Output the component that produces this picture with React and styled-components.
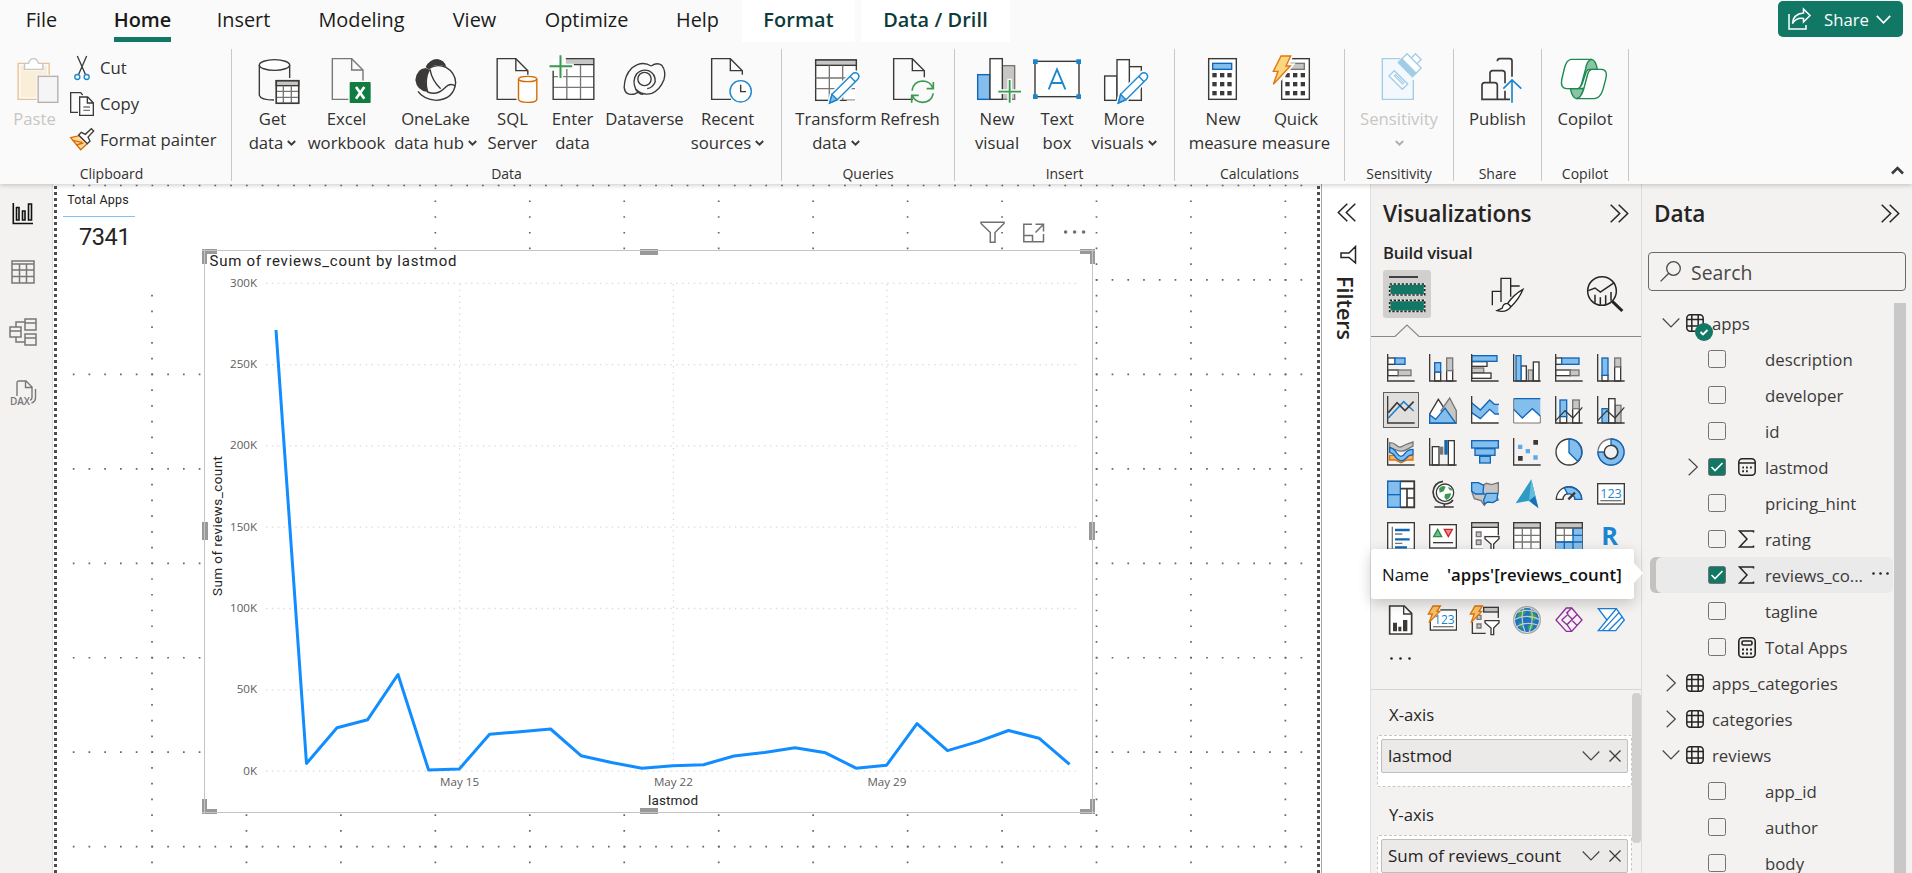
import React from 'react';
import styled, { createGlobalStyle, css } from 'styled-components';

const DARK = '#3b3a39';
const BLUE = '#83beec';
const BLUE_D = '#1066b8';
const GRAY = '#c8c6c4';
const GRAY_D = '#797775';
const GREEN = '#117865';
const UI = "'Open Sans', 'Noto Sans', sans-serif";
const DIN = "Roboto, 'Noto Sans', sans-serif";

const Global = createGlobalStyle`
  * { box-sizing: border-box; }
  body { margin: 0; background: #fff; font-family: ${UI}; color: #252423; overflow: hidden; }
  svg { display: block; flex: none; overflow: visible; }
`;

const Page = styled.div`
  width: 1912px;
  height: 873px;
  display: flex;
  flex-direction: column;
  overflow: hidden;
`;

/* ---------- ribbon ---------- */
const Ribbon = styled.header`
  height: 184px;
  flex: none;
  background: #fafafa;
  box-shadow: 0 1px 5px rgba(0, 0, 0, 0.22);
  position: relative;
  z-index: 3;
  display: flex;
  flex-direction: column;
`;
const TabBar = styled.nav`
  height: 49px;
  display: flex;
`;
const Tab = styled.div`
  width: ${(p) => p.$w}px;
  height: 42px;
  margin-left: ${(p) => p.$gap || 0}px;
  display: flex;
  justify-content: center;
  font-size: 19.9px;
  line-height: 40px;
  color: #1b1a19;
  white-space: nowrap;
  ${(p) => p.$active && css`font-weight: 600;`}
  ${(p) => p.$context && css`font-weight: 600; background: #fff; color: #0c3b3a; letter-spacing: 0.1px;`}
  span { ${(p) => p.$active && css`border-bottom: 5px solid ${GREEN}; height: 42px;`} }
`;
const ShareButton = styled.button`
  margin: 1px 9px 0 auto;
  width: 125px;
  height: 36px;
  border: 0;
  border-radius: 5px;
  background: ${GREEN};
  color: #fff;
  font: 400 16.7px/36px ${UI};
  padding: 0 12px 0 10px;
  display: flex;
  align-items: center;
  span { margin: 0 7px 0 13px; width: 45px; padding-top: 1px; }
`;
const Groups = styled.div`
  display: flex;
  height: 132px;
`;
const Group = styled.section`
  width: ${(p) => p.$w}px;
  border-right: 1px solid #c8c8c8;
  display: flex;
  flex-direction: column;
`;
const GroupBody = styled.div`
  height: 118px;
  flex: none;
  display: flex;
  justify-content: ${(p) => (p.$pad ? 'flex-start' : 'center')};
  padding-left: ${(p) => p.$pad || 0}px;
  padding-top: 5px;
`;
const GroupLabel = styled.div`
  height: 14px;
  padding-right: ${(p) => p.$shift || 0}px;
  font-size: 14px;
  line-height: 14px;
  text-align: center;
  color: #323130;
`;
const Command = styled.div`
  width: ${(p) => p.$w}px;
  display: flex;
  flex-direction: column;
  align-items: center;
  font-size: 16.7px;
  line-height: 24px;
  color: ${(p) => (p.$off ? '#c8c6c4' : '#323130')};
  white-space: nowrap;
`;
const CommandText = styled.div`
  margin-top: 3px;
  min-height: 24px;
  display: flex;
  align-items: center;
  gap: 4px;
  & + & { margin-top: 0; }
`;
const ClipList = styled.div`
  display: flex;
  flex-direction: column;
  margin-top: -4px;
`;
const ClipRow = styled.div`
  height: 36px;
  display: flex;
  align-items: center;
  gap: 6px;
  font-size: 16.7px;
  line-height: 26px;
  color: #323130;
  white-space: nowrap;
`;
const Collapse = styled.div`
  margin: 117px 8px 0 auto;
`;

/* Ribbon icons are drawn on a grid of three units to the pixel. */
const Ico = ({ x, y = 162, w = 48, h = 50, children, c = DARK, sw = 4.2 }) => (
  <svg width={w} height={h} viewBox={`${x} ${y} ${w * 3} ${h * 3}`} fill="none" stroke={c} strokeWidth={sw}>
    {children}
  </svg>
);
const Chev = ({ c = DARK }) => (
  <svg width="9" height="6" viewBox="0 0 9 6" fill="none" stroke={c} strokeWidth="1.9">
    <path d="M.8 1 4.5 4.6 8.2 1" />
  </svg>
);
const Doc = ({ x, c = DARK, end = 240 }) => (
  <>
    <path d={`M${x + 60} 298H${x + 2}V176H${x + 58}L${x + 94} 212V${end - 16}`} stroke={c} fill="none" />
    <path d={`M${x + 58} 176V212H${x + 94}`} stroke={c} />
  </>
);
const Pencil = ({ x, y }) => (
  <g transform={`translate(${x} ${y})`} stroke="#1b86d0">
    <path d="M3 92 10 66 72 4Q80-2 88 5 94 12 88 20L26 82Z" fill="#fafafa" stroke="#fafafa" strokeWidth="14" />
    <path d="M3 92 10 66 72 4Q80-2 88 5 94 12 88 20L26 82Z" fill="#fff" />
    <path d="M3 92 10 66 26 82Z" fill={BLUE} />
    <path d="M64 12 80 28" />
  </g>
);

const icons = {
  get: (
    <Ico x={743}>
      <path d="M774 195V286Q778 300 818 300M865 195V234" />
      <ellipse cx="819.5" cy="195" rx="45.5" ry="16" fill="#fff" />
      <rect x="825" y="242" width="67" height="68" fill="#fff" />
      <rect x="825" y="242" width="67" height="15" fill={GRAY} />
      <path d="M825 274H892M825 292H892M846 257V310M870 257V310" stroke={GRAY_D} strokeWidth="4" />
      <rect x="825" y="242" width="67" height="68" />
    </Ico>
  ),
  excel: (
    <Ico x={970}>
      <path d="M998 176H1056L1090 210V298H998Z" fill="#fafafa" stroke="#797775" />
      <path d="M1056 176V210H1090" stroke="#797775" />
      <rect x="1046" y="242" width="70" height="70" fill="#fafafa" stroke="none" />
      <rect x="1050" y="246" width="63" height="63" rx="3" fill="#107c41" stroke="none" />
      <path d="M1069 261 1094 296M1094 261 1069 296" stroke="#fff" strokeWidth="8" />
    </Ico>
  ),
  onelake: (
    <Ico x={1236}>
      <path d="M1277 201Q1288 178 1312 177 1334 180 1339 201 1308 186 1284 208Z" fill={DARK} stroke="none" />
      <path d="M1277 204Q1250 206 1246 240 1250 272 1283 276 1270 240 1288 210Z" fill={DARK} stroke="none" />
      <path d="M1286 206Q1310 190 1338 202 1366 218 1367 248 1362 298 1309 301 1270 298 1254 274" />
      <path d="M1288 208Q1272 240 1283 276 1310 288 1334 264 1350 246 1366 258M1290 208Q1296 242 1322 266" />
    </Ico>
  ),
  sql: (
    <Ico x={25.5}>
      <Doc x={48} />
      <path d="M114 237V298Q116 307 142 307 168 307 169 298V237" stroke="#d86b00" fill="#fff" />
      <ellipse cx="141.500" cy="237" rx="27.500" ry="8" stroke="#d86b00" fill="#fff" />
    </Ico>
  ),
  enter: (
    <Ico x={205.5}>
      <rect x="218" y="176" width="122" height="122" fill="#fff" stroke="none" />
      <rect x="256" y="176" width="84" height="17" fill={GRAY} stroke="none" />
      <path d="M218 230H340M218 262H340M259 200V298M300 196V298" stroke={GRAY_D} strokeWidth="4" />
      <path d="M256 176H340V298H218V212M276 194H340" />
      <path d="M240 162V236M204 199H280" stroke="#fafafa" strokeWidth="16" />
      <path d="M240 166V234M207 199H275" stroke="#3a9a50" strokeWidth="6" />
    </Ico>
  ),
  dataverse: (
    <Ico x={421.5}>
      <circle cx="492" cy="237" r="20" />
      <path d="M512 198Q484 180 454 204 432 226 431 262 434 288 462 282 468 280 474 276" />
      <path d="M512 198Q530 186 544 196 558 214 550 240 538 270 514 280 486 288 466 268 454 244 468 222 484 206 504 212 526 222 524 246 516 264 500 266" />
      <path d="M466 268Q474 282 488 283" />
    </Ico>
  ),
  recent: (
    <Ico x={672}>
      <Doc x={693} />
      <circle cx="782" cy="274" r="32" fill="#fff" stroke="#1b86d0" />
      <path d="M782 254V275H798" />
    </Ico>
  ),
  transform: (
    <Ico x={996}>
      <rect x="1007" y="180" width="122" height="121" fill="#fff" />
      <rect x="1007" y="180" width="122" height="16" fill={GRAY} />
      <path d="M1007 234H1129M1007 266H1129M1048 196V300M1088 196V300" stroke={GRAY_D} strokeWidth="4" />
      <path d="M1100 310H1134V240" stroke="#fafafa" strokeWidth="18" />
      <Pencil x={1046} y={217} />
    </Ico>
  ),
  refresh: (
    <Ico x={1218}>
      <Doc x={1239} end={248} />
      <path d="M1296 272Q1300 244 1328 243 1350 243 1359 264M1360 246V266H1340M1360 280Q1354 306 1328 307 1304 306 1297 286M1295 308V286H1316" stroke="#3a9a50" strokeWidth="5" />
    </Ico>
  ),
  newVisual: (
    <Ico x={39}>
      <rect x="53" y="224" width="36" height="74" fill={BLUE} stroke={BLUE_D} />
      <rect x="127" y="197" width="37" height="101" fill={GRAY} stroke={GRAY_D} />
      <rect x="90" y="176" width="37" height="122" fill="#fff" />
      <path d="M149 236V312M112 275H186" stroke="#fafafa" strokeWidth="14" />
      <path d="M149 240V308M115 275H183" stroke="#3a9a50" strokeWidth="5.500" />
    </Ico>
  ),
  text: (
    <Ico x={219}>
      <rect x="225" y="184" width="132" height="106" fill="#fff" />
      <path d="M219 178h14v14h-14ZM349 178h14v14h-14ZM219 283h14v14h-14ZM349 283h14v14h-14Z" fill="#1b86d0" stroke="none" />
      <path d="M266 268 291 208 316 268M274 249H308" stroke="#1b86d0" strokeWidth="5.500" />
    </Ico>
  ),
  more: (
    <Ico x={420}>
      <rect x="434" y="228" width="37" height="73" fill="#fff" />
      <rect x="508" y="200" width="36" height="101" fill="#fff" />
      <rect x="471" y="179" width="37" height="122" fill="#fff" />
      <Pencil x={472} y={217} />
    </Ico>
  ),
  calc: (
    <Ico x={717}>
      <rect x="746" y="176" width="83" height="122" fill="#fff" />
      <rect x="758" y="190" width="57" height="18" fill={BLUE} stroke={BLUE_D} />
      {[219, 246, 273].map((y) => [757, 780, 802].map((x) => <rect key={x + y * 9} x={x} y={y} width="13" height="13" fill={DARK} stroke="none" />))}
    </Ico>
  ),
  quick: (
    <Ico x={936}>
      <rect x="965" y="176" width="83" height="122" fill="#fff" />
      <rect x="984" y="190" width="49" height="18" fill={GRAY} stroke={GRAY_D} />
      {[219, 246, 273].map((y) => [976, 999, 1022].map((x) => <rect key={x + y * 9} x={x} y={y} width="13" height="13" fill={DARK} stroke="none" />))}
      <path d="M963 168H992L980 197H992L946 253 953 224H939Z" fill="#fafafa" stroke="#fafafa" strokeWidth="14" />
      <path d="M963 168H992L978 198H991L940 253 954 214H940Z" fill="#fcd77f" stroke="#e07a10" />
    </Ico>
  ),
  sensitivity: (
    <Ico x={1246} c="#a3cde6">
      <path d="M1322 176H1268V298H1361V240" fill="#f3f8fc" />
      <g transform="rotate(45 1342 204)">
        <rect x="1330" y="156" width="24" height="24" fill="#fff" />
        <rect x="1312" y="174" width="60" height="22" fill="#fff" />
        <rect x="1312" y="196" width="60" height="15" fill="#a3cde6" />
      </g>
      <path d="M1304 212 1344 252 1328 268 1288 228Z" fill="#fff" />
      <path d="M1304 224 1332 252" strokeWidth="9" />
      <path d="M1305 225 1331 251" stroke="#fff" strokeWidth="2.500" />
    </Ico>
  ),
  publish: (
    <Ico x={126} sw={5}>
      <path d="M150 298V256Q150 248 158 248H188Q196 248 196 256V298ZM174 246V220Q174 212 182 212H211Q219 212 219 220V250M196 184Q196 176 203 176H233Q240 176 240 183V230M150 298H234M219 272V298" />
      <path d="M240 308V240M214 266 240 240 268 266" stroke="#1b86d0" />
    </Ico>
  ),
  copilot: (
    <Ico x={388} c="#1a8a50">
      <path d="M458 208Q466 178 480 178 492 180 497 208H474Q466 208 462 220L452 250Q446 265 436 265Z" fill="#8cc3a4" />
      <path d="M456 265Q448 296 434 296 422 294 416 266H440Z" fill="#8cc3a4" />
      <path d="M480 178H418Q404 180 398 206L390 240Q386 264 404 266H438Q446 264 450 250L462 206Q466 180 480 178Z" fill="#fff" />
      <path d="M434 296H488Q506 294 514 268L522 238Q530 210 510 208H480Q472 210 468 222L456 268Q448 294 434 296Z" fill="#fff" />
    </Ico>
  ),
};

const groups = [
  { label: 'Data', w: 550, pad: 7, items: [
    ['get', 67, ['Get', 'data'], 1], ['excel', 81, ['Excel', 'workbook']], ['onelake', 97, ['OneLake', 'data hub'], 1],
    ['sql', 57, ['SQL', 'Server']], ['enter', 63, ['Enter', 'data']], ['dataverse', 81, ['Dataverse']], ['recent', 85, ['Recent', 'sources'], 1]] },
  { label: 'Queries', w: 173, pad: 11, items: [['transform', 86, ['Transform', 'data'], 1], ['refresh', 62, ['Refresh']]] },
  { label: 'Insert', w: 220, pad: 15, items: [['newVisual', 54, ['New', 'visual']], ['text', 66, ['Text', 'box']], ['more', 68, ['More', 'visuals'], 1]] },
  { label: 'Calculations', w: 170, pad: 12, items: [['calc', 72, ['New', 'measure']], ['quick', 74, ['Quick', 'measure']]] },
  { label: 'Sensitivity', w: 109, items: [['sensitivity', 100, ['Sensitivity', ''], 1, true]] },
  { label: 'Share', w: 88, items: [['publish', 80, ['Publish']]] },
  { label: 'Copilot', w: 87, items: [['copilot', 80, ['Copilot']]] },
];

/* ---------- body ---------- */
const Body = styled.main`
  flex: 1;
  display: flex;
  min-height: 0;
`;
const Rail = styled.aside`
  width: 53px;
  flex: none;
  background: #f3f2f1;
  border-right: 1px solid #e1dfdd;
  padding: 18px 6px 0 0;
  display: flex;
  flex-direction: column;
  align-items: center;
  gap: 34px;
`;
const Canvas = styled.section`
  width: 1269px;
  flex: none;
  position: relative;
  background: #fff;
  border-right: 1px solid #a6a6a6;
  overflow: hidden;
`;
const CanvasLayer = styled.svg`
  position: absolute;
  left: 0;
  top: 0;
`;
const Card = styled.div`
  position: absolute;
  left: 10px;
  top: 3px;
  width: 290px;
  height: 102px;
  background: #fff;
`;
const CardTitle = styled.div`
  width: 72px;
  height: 30px;
  border-bottom: 1px solid #83c0f5;
  padding-right: 2px;
  text-align: center;
  font: 12.5px/26px ${DIN};
  letter-spacing: 0.2px;
  white-space: nowrap;
`;
const CardValue = styled.div`
  padding-left: 16px;
  font: 400 23.5px/40px ${DIN};
  letter-spacing: -0.4px;
`;

const pts = [[276, 330], [306.500, 763.500], [337, 727.700], [367.700, 719.700], [398, 674.500], [428.600, 770], [459.300, 769], [489.600, 734.300], [520, 731.700], [550.600, 729], [581, 755.700], [611.500, 762.500], [642, 768.300], [673, 765.700], [703.500, 764.700], [734, 756], [764.600, 752.400], [795, 747.700], [825.600, 752.800], [856, 768.200], [886.600, 765.200], [917, 723.600], [947.500, 750.600], [978, 741.600], [1008.500, 730.500], [1039, 738.200], [1069.600, 764.400]];
const yTicks = ['300K', '250K', '200K', '150K', '100K', '50K', '0K'];
const xTicks = [['May 15', 459.6], ['May 22', 673.4], ['May 29', 886.9]];
const H = '#999';

const Report = () => (
  <>
    <CanvasLayer width="1269" height="689" viewBox="53 184 1269 689" fill="none">
      <g stroke="#666" strokeWidth="1.7" strokeDasharray="1.7 14.04">
        {[0, 1, 2, 3, 4, 5, 6, 7].map((i) => <path key={i} d={`M72.800 ${185.500 + 94.450 * i}H1304`} />)}
        {[...Array(13)].map((_, i) => <path key={i} d={`M${152 + 94.450 * i} 200.400V873`} />)}
      </g>
      <path d="M55.500 186V873M1318.500 186V873" stroke="#4d4d4d" strokeWidth="3" strokeDasharray="3 3" />
    </CanvasLayer>
    <Card>
      <CardTitle>Total Apps</CardTitle>
      <CardValue>7341</CardValue>
    </Card>
    <CanvasLayer width="1269" height="689" viewBox="53 184 1269 689" fill="none">
      <rect x="204.500" y="250.500" width="888" height="562" fill="#fff" stroke="#b8b8b8" />
      <path d="M202 249h15v5h-10v10h-5zM1095 249h-15v5h10v10h5zM202 814h15v-5h-10v-10h-5zM1095 814h-15v-5h10v-10h5zM640 249h18v6h-18zM640 808h18v6h-18zM202 522h6v18h-6zM1089 522h6v18h-6z" fill={H} />
      <path d="M204.500 249V814M1092.500 249V814M202 250.500H1095M202 812.500H1095" stroke="#c4c4c4" />
      <g stroke="#dcdcdc" strokeWidth="1.300" strokeDasharray="1.500 4.360">
        {yTicks.map((t, i) => <path key={t} d={`M266 ${283.300 + 81.300 * i}H1077`} />)}
        {xTicks.map(([t, x]) => <path key={t} d={`M${x} 284V771`} />)}
      </g>
      <polyline points={pts.map((p) => p.join(',')).join(' ')} stroke="#118dff" strokeWidth="3" strokeLinejoin="round" />
      <g fill="#605e5c" fontFamily={UI} fontSize="11.600">
        {yTicks.map((t, i) => <text key={t} x="257" y={286.800 + 81.300 * i} textAnchor="end">{t}</text>)}
        {xTicks.map(([t, x]) => <text key={t} x={x} y="785.700" textAnchor="middle">{t}</text>)}
      </g>
      <g fill="#252423" fontFamily={DIN}>
        <text x="209.500" y="266" fontSize="15" textLength="247">Sum of reviews_count by lastmod</text>
        <text x="673" y="805" fontSize="13.500" textAnchor="middle" textLength="50">lastmod</text>
        <text transform="translate(221.500 526) rotate(-90)" fontSize="13.500" textAnchor="middle" textLength="140">Sum of reviews_count</text>
      </g>
      <g stroke="#707070" strokeWidth="1.500">
        <path d="M981 222.300H1004V223.500L995 232.500V242.300H990.300V232.500L981 223.500Z" />
        <path d="M1032 224.300H1023.800V241.800H1043.500V234M1023.800 235.500H1032.500V241.800M1035.500 224.300H1043.500V231.500M1043 224.800 1035.500 232.500" />
        <path d="M1065.600 232h.01M1074.600 232h.01M1083.600 232h.01" strokeWidth="3.600" strokeLinecap="round" />
      </g>
    </CanvasLayer>
  </>
);

const FiltersPane = styled.aside`
  width: 48px;
  flex: none;
  padding-top: 19px;
  display: flex;
  flex-direction: column;
  align-items: center;
  background: #fff;
`;
const FiltersTitle = styled.div`
  writing-mode: vertical-rl;
  font-weight: 600;
  font-size: 21.5px;
  line-height: 24px;
  margin: 12px 2px 0 0;
`;
const FilterGlyph = styled.svg`
  margin-left: 4px;
`;
const VizPane = styled.aside`
  width: 272px;
  flex: none;
  background: #f3f2f1;
  border-left: 1px solid #e1dfdd;
  border-right: 1px solid #dddbd9;
  position: relative;
  display: flex;
  flex-direction: column;
`;
const PaneHead = styled.div`
  display: flex;
  justify-content: space-between;
  align-items: center;
  height: 32px;
  margin: 13px 12px 0 ${(p) => p.$l || 12}px;
  font-weight: 600;
  font-size: 22.6px;
  letter-spacing: -0.1px;
`;
const SubHead = styled.div`
  font-weight: 600;
  font-size: 16.6px;
  line-height: 24px;
  margin: 12px 0 5px 12px;
  letter-spacing: -0.2px;
  height: 24px;
`;
const ModeRow = styled.div`
  display: flex;
  padding-left: 12px;
  height: 48px;
  align-items: center;
`;
const Mode = styled.div`
  width: 48px;
  height: 48px;
  margin-right: 51px;
  border-radius: 3px;
  background: ${(p) => (p.$on ? '#d2d0ce' : 'transparent')};
`;
const Notch = styled.svg`
  margin-top: 6px;
`;
const Gallery = styled.div`
  display: grid;
  grid-template-columns: repeat(6, 42px);
  grid-auto-rows: 42px;
  padding: 9px 0 0 9px;
  height: 303px;
`;
const Tile = styled.div`
  width: 42px;
  height: 42px;
  display: flex;
  align-items: center;
  justify-content: center;
  div {
    width: 36px;
    height: 36px;
    display: flex;
    align-items: center;
    justify-content: center;
    ${(p) => p.$on && css`background: #e1dfdd; border: 1px solid #605e5c;`}
  }
`;
const Dots = styled.div`
  height: 49px;
  flex: none;
  border-bottom: 1px solid #d8d6d4;
  padding: 16px 0 0 19px;
`;
const Wells = styled.div`
  flex: 1;
  min-height: 0;
  display: flex;
  overflow: hidden;
`;
const WellList = styled.div`
  width: 261px;
  padding-left: 6px;
`;
const WellLabel = styled.div`
  height: 45px;
  font-size: 16.7px;
  line-height: 50px;
  padding-left: 12px;
`;
const Well = styled.div`
  width: 255px;
  height: 52px;
  background: #fff;
  border: 1px dashed #c8c6c4;
  border-radius: 2px;
  padding: 3px;
  margin-bottom: 3px;
`;
const Pill = styled.div`
  height: 34px;
  border: 1px solid #c0bebc;
  border-radius: 2px;
  background: #ebeae9;
  display: flex;
  align-items: center;
  justify-content: space-between;
  padding: 0 6px;
  font-size: 17px;
  line-height: 30px;
`;
const PillIcons = styled.div`
  display: flex;
  align-items: center;
  gap: 9px;
`;
const WellThumb = styled.div`
  width: 9px;
  height: 150px;
  margin-top: 3px;
  border-radius: 4px;
  background: #d2d0ce;
`;
const Tip = styled.div`
  position: absolute;
  z-index: 4;
  left: 0;
  top: 365px;
  width: 263px;
  height: 50px;
  background: #fff;
  border-radius: 3px;
  box-shadow: 0 4px 14px rgba(0, 0, 0, 0.2);
  display: flex;
  align-items: center;
  padding: 1px 0 0 11px;
  font-size: 16.8px;
  color: #111;
  white-space: nowrap;
  b { font-weight: 600; margin-left: 18px; letter-spacing: 0.05px; }
  &::after {
    content: '';
    position: absolute;
    right: -9px;
    top: 14px;
    border: 10px solid transparent;
    border-width: 10px 0 10px 9px;
    border-left-color: #fff;
  }
`;

const DataPane = styled.aside`
  flex: 1;
  background: #f3f2f1;
  display: flex;
  flex-direction: column;
`;
const Search = styled.div`
  margin: 23px 6px 12px 6px;
  height: 39px;
  flex: none;
  border: 1.5px solid #6b6966;
  border-radius: 4px;
  display: flex;
  align-items: center;
  padding-left: 11px;
  gap: 10px;
  font-size: 19.4px;
  line-height: 36px;
  color: #4a4846;
  span { padding-top: 3px; }
`;
const TreeWrap = styled.div`
  flex: 1;
  min-height: 0;
  overflow: hidden;
  display: flex;
  padding: 0 6px 0 8px;
`;
const Tree = styled.div`
  width: 243px;
  padding-top: 2px;
`;
const TreeBar = styled.div`
  width: 12px;
  margin-left: 1px;
  background: #c8c8c8;
`;
const Row = styled.div`
  height: 36px;
  display: flex;
  align-items: center;
  font-size: 16.8px;
  line-height: 30px;
  border-radius: 6px;
  white-space: nowrap;
  color: #3b3a39;
  ${(p) => p.$on && css`background: #eaeaea; box-shadow: inset 6px 0 0 #c3c2c1;`}
`;
const Slot = styled.div`
  width: ${(p) => p.$w}px;
  display: flex;
  justify-content: center;
  position: relative;
  flex: none;
`;
const Label = styled.span`
  padding-top: 1px;
`;
const Check = styled.span`
  width: 18px;
  height: 18px;
  flex: none;
  border: 1px solid #757371;
  border-radius: 2.5px;
  background: ${(p) => (p.$on ? GREEN : 'transparent')};
`;
const Badge = styled.svg`
  position: absolute;
  left: 9px;
  top: 9px;
`;
const MoreDots = styled.div`
  margin: 0 4px 3px auto;
`;

const Double = ({ flip }) => (
  <svg width="19" height="19" viewBox="0 0 19 19" fill="none" stroke="#252423" strokeWidth="1.500" transform={flip ? 'scale(-1 1)' : undefined}>
    <path d="M.7.700 9.700 9.500.7 18.300M8.700.700 17.700 9.500 8.700 18.300" />
  </svg>
);

/* ---------- visual gallery, on an 84-unit grid ---------- */
const B = ({ p, k = 'w' }) => {
  const [x, y, width, height] = p;
  const c = { w: ['#fff', DARK], b: [BLUE, BLUE_D], g: [GRAY, GRAY_D], d: [BLUE_D, BLUE_D], s: [GRAY_D, GRAY_D] }[k];
  return <rect x={x} y={y} width={width} height={height} fill={c[0]} stroke={c[1]} />;
};
const Axis = () => <path d="M2 0V81H83" />;
const Bolt = () => (
  <path d="M12 0H34L24 16H32L0 50 10 24H-2Z" fill="#f9c069" stroke="#d9730d" />
);
const V = ({ children }) => (
  <svg width="28" height="28" viewBox="0 0 84 84" fill="none" stroke={DARK} strokeWidth="4">{children}</svg>
);
const gallery = [
  <><B p={[2, 12, 22, 19]} /><B p={[24, 12, 30, 19]} k="b" /><B p={[2, 48, 32, 17]} /><B p={[34, 48, 38, 17]} k="g" /><Axis /></>,
  <><B p={[17, 54, 18, 27]} /><B p={[17, 26, 18, 28]} k="b" /><B p={[53, 48, 18, 33]} /><B p={[53, 12, 18, 38]} k="g" /><Axis /></>,
  <><B p={[2, 23, 46, 14]} /><B p={[2, 5, 76, 17]} k="b" /><B p={[2, 42, 36, 15]} k="g" /><B p={[2, 57, 58, 16]} /><Axis /></>,
  <><B p={[24, 36, 16, 45]} /><B p={[9, 5, 15, 76]} k="b" /><B p={[46, 48, 14, 33]} k="g" /><B p={[61, 24, 17, 57]} /><Axis /></>,
  <><B p={[2, 12, 18, 19]} /><B p={[20, 12, 52, 19]} k="b" /><B p={[2, 48, 44, 17]} /><B p={[46, 48, 26, 17]} k="g" /><Axis /></>,
  <><B p={[15, 64, 18, 17]} /><B p={[15, 12, 18, 52]} k="b" /><B p={[53, 38, 18, 43]} /><B p={[53, 12, 18, 26]} k="g" /><Axis /></>,
  <><path d="M4 66 50 17 80 45" stroke="#1b86d0" strokeWidth="5" /><path d="M4 50 30 20 54 44 80 17" strokeWidth="5" /><Axis /></>,
  <><path d="M2 81V54L28 10 52 46 70 81Z" fill="#fff" /><path d="M36 44 62 6 82 44V81H60Z" fill={GRAY} stroke={GRAY_D} /><path d="M2 56 20 70 48 36 80 81H2Z" fill={BLUE} stroke={BLUE_D} /></>,
  <><path d="M2 52 28 70 56 42 82 54V81H2Z" fill="#fff" stroke="none" /><path d="M2 20 28 42 56 12 70 25H82V54L72 52 56 40 28 68 2 50Z" fill={BLUE} stroke="none" /><path d="M2 20 28 42 56 12 70 25H84M2 50 28 68 56 40 72 54H84" stroke={BLUE_D} /><Axis /></>,
  <><path d="M2 8H82V60L58 38 28 66 2 40Z" fill={BLUE} stroke="none" /><path d="M2 40 28 66 58 38 82 60V81H2Z" fill="#fff" stroke="none" /><path d="M2 40 28 66 58 38 82 60M2 8H82" stroke={BLUE_D} /><path d="M2 8V81H82V60" stroke={GRAY_D} strokeWidth="3" /></>,
  <><B p={[15, 60, 20, 21]} /><B p={[15, 12, 20, 50]} k="b" /><B p={[53, 36, 20, 45]} /><B p={[53, 12, 20, 26]} k="g" /><path d="M2 74 30 44 54 66 82 34" /><Axis /></>,
  <><B p={[15, 38, 20, 43]} k="b" /><B p={[54, 28, 18, 53]} k="g" /><B p={[35, 8, 19, 73]} /><path d="M2 74 30 44 54 66 82 34" /><Axis /></>,
  <><path d="M8 52H24L42 60 58 52H78V66H60L42 74 24 66H8Z" fill="#f9b35c" stroke="#d9730d" /><path d="M8 14Q20 14 28 22T44 26 60 18L78 12V24L60 34Q44 44 28 36L8 28Z" fill={GRAY} stroke={GRAY_D} /><path d="M8 28Q22 32 30 46 42 64 54 46 62 34 78 34V50Q66 50 58 60 42 78 26 58 20 46 8 44Z" fill={BLUE} stroke={BLUE_D} /><Axis /></>,
  <><B p={[10, 26, 20, 55]} /><B p={[35, 28, 6, 20]} k="s" /><B p={[48, 8, 6, 40]} k="d" /><B p={[58, 8, 18, 73]} /><Axis /></>,
  <><B p={[2, 8, 80, 22]} k="b" /><B p={[12, 32, 60, 20]} k="b" /><B p={[26, 55, 32, 20]} k="b" /></>,
  <><g stroke="none"><path d="M61 6h14v14h-14zM15 54h14v14h-14z" fill={DARK} /><path d="M15 20h13v13h-13zM38 33h13v13h-13zM61 52h13v13h-13z" fill="#5ea9e8" /></g><Axis /></>,
  <><circle cx="42" cy="42" r="39" fill="#fff" /><path d="M42 3A39 39 0 0 1 68 70L42 44Z" fill={BLUE} stroke={BLUE_D} /></>,
  <><circle cx="42" cy="42" r="30" stroke="#fff" strokeWidth="18" /><circle cx="42" cy="42" r="39" stroke={GRAY_D} /><path d="M42 3A39 39 0 1 1 3 42H21A21 21 0 1 0 42 21Z" fill={BLUE} stroke={BLUE_D} /><circle cx="42" cy="42" r="20" fill="#f3f2f1" /></>,
  <><rect x="2" y="4" width="80" height="78" fill="#fff" /><B p={[2, 4, 38, 40]} k="b" /><B p={[2, 44, 38, 38]} k="b" /><path d="M40 26H82M60 26V82M60 54H82" strokeWidth="5" /><path d="M40 4H82V82H40" strokeWidth="5" /></>,
  <><circle cx="48" cy="38" r="26" fill="#fff" /><path d="M30 26Q38 14 50 20L44 34 32 38ZM56 22Q66 22 72 32L62 30ZM48 42 66 40Q66 54 52 60L46 52Z" fill="#3a9a50" stroke="none" /><path d="M42 4Q14 8 12 36 14 68 46 72 64 72 72 60M46 72V80M16 81H74" strokeWidth="5" /></>,
  <><path d="M2 8H20L36 16 46 10 62 14 82 8V34L78 52 82 60 60 62 46 68 40 76 30 62 10 56 4 40Z" fill={GRAY} stroke={GRAY_D} /><path d="M2 8H22L38 16 36 36 40 42 14 42 2 34ZM46 40H80L78 60 66 68 50 66 40 72 38 60Z" fill={BLUE} stroke={BLUE_D} /></>,
  <><path d="M55-2 8 70 48 62 76 84Z" fill="#2e9bc4" stroke="none" /><path d="M55-2 48 62 76 84Z" fill="#63bede" stroke="none" /><path d="M48 62 76 84 66 48Z" fill="#1572b5" stroke="none" /></>,
  <><path d="M4 58A38 38 0 0 1 80 58H60A18 18 0 0 0 24 58Z" fill="#fff" /><path d="M28 24A38 38 0 0 1 80 58H60A18 18 0 0 0 38 42Z" fill={BLUE} stroke={BLUE_D} /><path d="M40 58 60 38" strokeWidth="7" /></>,
  <><rect x="2" y="11" width="80" height="61" fill="#fff" /><text x="42" y="54" textAnchor="middle" fontFamily={UI} fontSize="38" fill="#1b86d0" stroke="none">123</text><path d="M10 62H74" stroke={GRAY_D} /></>,
  <><rect x="2" y="2" width="80" height="80" fill="#fff" /><path d="M16 14V84" stroke={GRAY_D} /><path d="M24 24H68M24 52H68M24 76H60" stroke={BLUE_D} strokeWidth="7" /><path d="M24 36H46M24 64H46" stroke={GRAY_D} /></>,
  <><rect x="2" y="8" width="80" height="70" fill="#fff" /><path d="M14 44 26 22 38 44Z" fill="#6cc28a" stroke="#2b8a44" /><path d="M46 22H70L58 44Z" fill="#f18a8a" stroke="#c8252c" /><path d="M12 62H72" /></>,
  <><rect x="2" y="2" width="80" height="80" fill="#fff" /><rect x="2" y="2" width="80" height="14" fill={GRAY} /><path d="M16 30h14v14h-14zM16 54h14v14h-14z" fill={GRAY} stroke={GRAY_D} /><path d="M36 40H90V90H36Z" fill="#f3f2f1" stroke="none" /><path d="M42 44H84V50L68 66V86H60V66L42 50Z" fill="#fff" /></>,
  <><rect x="2" y="2" width="80" height="80" fill="#fff" /><rect x="2" y="2" width="80" height="16" fill={GRAY} /><path d="M2 40H82M2 60H82M28 18V82M54 18V82" stroke={GRAY_D} /></>,
  <><rect x="2" y="2" width="80" height="80" fill="#fff" /><path d="M54 18H82V82H2V60H54Z" fill={BLUE} stroke="none" /><rect x="2" y="2" width="80" height="16" fill={GRAY} /><path d="M2 40H54M2 60H54M28 18V60M54 18V40" stroke={GRAY_D} /><path d="M54 18V82M54 40H82M54 60H82M2 60H54M28 60V82" stroke={BLUE_D} /></>,
  <><text x="38" y="70" textAnchor="middle" fontFamily={UI} fontWeight="700" fontSize="76" fill="#1b86d0" stroke="none">R</text></>,
  null, null, null, null, null, null,
  <><path d="M8 0H52L74 22V84H8Z" fill="#fff" strokeWidth="5" /><path d="M50 0V24H74" /><path d="M18 50h12v26H18zM34 62h9v14H34zM48 42h13v34H48z" fill={DARK} stroke="none" /></>,
  <><path d="M34 12H82V72H4V46" fill="none" /><path d="M34 14H80V70H6V46Z" fill="#fff" stroke="none" /><text x="46" y="54" textAnchor="middle" fontFamily={UI} fontSize="36" fill="#1b86d0" stroke="none">123</text><path d="M12 62H74" stroke={GRAY_D} /><Bolt /></>,
  <><rect x="38" y="4" width="44" height="14" fill={GRAY} /><path d="M82 18V36M4 48V82H44" /><path d="M18 28h12v12h-12zM18 54h12v12h-12z" fill={GRAY} stroke={GRAY_D} /><path d="M42 44H84V50L68 66V86H60V66L42 50Z" fill="#fff" /><Bolt /></>,
  <><circle cx="42" cy="42" r="36" fill="#1b74c4" stroke="none" /><path d="M12 30Q22 10 42 10L34 26 20 34ZM50 16Q70 22 72 38L62 46 50 36ZM16 50Q28 46 30 62L26 70ZM44 60 62 52 60 68 46 72Z" fill="#3aa648" stroke="none" /><circle cx="42" cy="42" r="40" stroke="#a6a6a6" /><path d="M2 42Q42 20 82 42M10 62Q42 44 76 58M10 20Q42 6 74 20M32 4Q20 40 38 82M54 4Q64 44 48 80" stroke="#c8c8c8" strokeWidth="3.500" /></>,
  <g stroke="#8e2f9c"><path d="M34 6H50L81 42 50 76H34L3 42Z" /><path d="M50 6 38 18 38 26 52 40 66 26M38 18 34 22M52 40 36 56 50 76M20 42 36 56M66 58 52 44M36 28 20 42" /></g>,
  <g stroke="#1a7fd6"><path d="M4 8H58L82 42 56 74H4L30 42Z" fill="#fff" /><path d="M30 42 58 8M16 74 66 20M34 74 76 32" /></g>,
];

/* ---------- field tree icons ---------- */
const TableGlyph = () => (
  <svg width="18" height="18" viewBox="0 0 18 18" fill="none" stroke="#252423" strokeWidth="1.500">
    <rect x=".8" y=".8" width="16.400" height="16.400" rx="3.500" />
    <path d="M1 5.500H17M1 12H17M5.800 1V17M12.200 1V17" />
  </svg>
);
const Cal = () => (
  <svg width="18" height="18" viewBox="0 0 18 18" fill="none" stroke="#252423" strokeWidth="1.500">
    <rect x=".8" y=".8" width="16.400" height="16.400" rx="3.500" /><path d="M1 5H17" />
    <path d="M8 9.500h1.800M12 9.500h1.800M4.200 13.200h1.800M8 13.200h1.800M4.400 9.500h1.600" strokeWidth="2" />
  </svg>
);
const Calc = () => (
  <svg width="18" height="21" viewBox="0 0 18 21" fill="none" stroke="#252423" strokeWidth="1.600">
    <rect x=".8" y=".8" width="16.400" height="19.400" rx="3.500" /><rect x="4" y="4" width="10" height="4" rx="1.500" />
    <path d="M4 12.500h2M8 12.500h2M12 12.500h2M4 16.500h2M8 16.500h2M12 16.500h2" strokeWidth="2" />
  </svg>
);
const Sigma = () => (
  <svg width="18" height="18" viewBox="0 0 18 18" fill="none" stroke="#252423" strokeWidth="1.500">
    <path d="M15.500 2.500V1H1.500L9 9 1.500 17H15.500V15.500" />
  </svg>
);
const Arrow = ({ open }) => (
  <svg width="18" height="18" viewBox="0 0 18 18" fill="none" stroke="#484644" strokeWidth="1.200">
    <path d={open ? 'M.7 4.500 9 13 17.300 4.500' : 'M4.700.7 13.300 9 4.700 17.300'} />
  </svg>
);
const Tick = () => (
  <svg width="16" height="16" viewBox="0 0 16 16" fill="none" stroke="#fff" strokeWidth="1.600"><path d="M2.500 8 6 11.500 13.500 4" /></svg>
);
const Ellipsis = ({ gap = 9 }) => (
  <svg width={gap * 2 + 3} height="3" viewBox={`0 0 ${gap * 2 + 3} 3`} fill="#252423">
    {[0, 1, 2].map((i) => <circle key={i} cx={1.5 + gap * i} cy="1.500" r="1.300" />)}
  </svg>
);
const Cross = () => (
  <svg width="12" height="12" viewBox="0 0 12 12" stroke="#3b3a39" strokeWidth="1.300"><path d="M.5.500 11.500 11.500M11.500.500.5 11.500" /></svg>
);

const tree = [
  { t: 'apps', open: true, badge: true },
  { f: 'description' }, { f: 'developer' }, { f: 'id' },
  { f: 'lastmod', on: true, icon: <Cal />, exp: true },
  { f: 'pricing_hint' }, { f: 'rating', icon: <Sigma /> },
  { f: 'reviews_co...', on: true, icon: <Sigma />, sel: true },
  { f: 'tagline' }, { f: 'Total Apps', icon: <Calc /> },
  { t: 'apps_categories' }, { t: 'categories' }, { t: 'reviews', open: true },
  { f: 'app_id' }, { f: 'author' }, { f: 'body' },
];

const TreeRow = ({ r }) =>
  r.t ? (
    <Row>
      <Slot $w={12} />
      <Slot $w={18}><Arrow open={r.open} /></Slot>
      <Slot $w={6} />
      <Slot $w={18}>
        <TableGlyph />
        {r.badge && (
          <Badge width="18" height="18" viewBox="0 0 18 18" fill="none">
            <circle cx="9" cy="9" r="9" fill={GREEN} />
            <path d="M5.500 9 8 11.500 12.500 7" stroke="#fff" strokeWidth="1.800" />
          </Badge>
        )}
      </Slot>
      <Slot $w={8} />
      <Label>{r.t}</Label>
    </Row>
  ) : (
    <Row $on={r.sel}>
      <Slot $w={34} />
      <Slot $w={18}>{r.exp && <Arrow />}</Slot>
      <Slot $w={6} />
      <Check $on={r.on}>{r.on && <Tick />}</Check>
      <Slot $w={12} />
      <Slot $w={18}>{r.icon}</Slot>
      <Slot $w={9} />
      <Label>{r.f}</Label>
      {r.sel && <MoreDots><Ellipsis gap={7} /></MoreDots>}
    </Row>
  );

export default function App() {
  return (
    <Page>
      <Global />
      <Ribbon>
        <TabBar>
          <Tab $w={83}>File</Tab>
          <Tab $w={119} $active><span>Home</span></Tab>
          <Tab $w={83}>Insert</Tab>
          <Tab $w={153}>Modeling</Tab>
          <Tab $w={73}>View</Tab>
          <Tab $w={151}>Optimize</Tab>
          <Tab $w={71}>Help</Tab>
          <Tab $w={113} $gap={9} $context>Format</Tab>
          <Tab $w={149} $gap={6} $context>Data / Drill</Tab>
          <ShareButton>
            <svg width="23" height="22" viewBox="0 0 23 22" fill="none" stroke="#fff" strokeWidth="1.500">
              <path d="M1 6V21H18V17M4.500 15.500Q5 6 15.500 5V1L22 7.500 15.500 14V10.500Q8 9.500 4.500 15.500Z" />
            </svg>
            <span>Share</span>
            <svg width="15" height="9" viewBox="0 0 15 9" fill="none" stroke="#fff" strokeWidth="1.700"><path d="M.8.8 7.500 7.800 14.200.8" /></svg>
          </ShareButton>
        </TabBar>
        <Groups>
          <Group $w={232}>
            <GroupBody $pad={6}>
              <Command $w={57} $off>
                <Ico x={31.5} c={GRAY}>
                  <path d="M72 190H53V298H108M127 190H146V224" stroke="#f0c090" />
                  <path d="M60 197H72V212H127V197H139V224H108V291H60Z" fill="#fbeed8" stroke="none" />
                  <path d="M72 208V190H84Q88 176 99 176T114 190H127V208Z" fill="#fff" />
                  <rect x="113" y="229" width="59" height="78" fill="#f5f5f5" stroke="#b5b3b1" />
                </Ico>
                <CommandText>Paste</CommandText>
              </Command>
              <Slot $w={7} />
              <ClipList>
                <ClipRow>
                  <Ico x={210} y={165} w={24} h={24} sw={4}>
                    <path d="M232 165 256 220M260 165 236 220" />
                    <circle cx="232" cy="228" r="7.500" stroke="#1b86d0" /><circle cx="260" cy="228" r="7.500" stroke="#1b86d0" />
                  </Ico>
                  Cut
                </ClipRow>
                <ClipRow>
                  <Ico x={210} y={273} w={24} h={24} sw={4}>
                    <path d="M234 334H212V275H242L248 282" /><path d="M239 288H263L280 305V343H239ZM262 288V306H280" fill="#fff" /><path d="M250 318H270M250 328H270" stroke={GRAY_D} />
                  </Ico>
                  Copy
                </ClipRow>
                <ClipRow>
                  <Ico x={210} y={381} w={24} h={24} sw={4}>
                    <path d="M212 410 238 404 262 428 242 446Z" fill="#fcd8a0" stroke="#d86b00" /><path d="M218 418 246 424M228 432 250 426" stroke="#d86b00" /><path d="M236 402 244 394 256 400 274 383 281 390 264 408 270 420 262 428Z" fill="#fff" />
                  </Ico>
                  Format painter
                </ClipRow>
              </ClipList>
            </GroupBody>
            <GroupLabel $shift={8}>Clipboard</GroupLabel>
          </Group>
          {groups.map((g) => (
            <Group key={g.label} $w={g.w}>
              <GroupBody $pad={g.pad}>
                {g.items.map(([k, w, lines, chev, off]) => (
                  <Command key={k} $w={w} $off={off}>
                    {icons[k]}
                    {lines.map((l, i) => (
                      <CommandText key={i}>{l || null}{chev && i === 1 ? <Chev c={off ? '#b0aeac' : DARK} /> : null}</CommandText>
                    ))}
                  </Command>
                ))}
              </GroupBody>
              <GroupLabel>{g.label}</GroupLabel>
            </Group>
          ))}
          <Collapse>
            <svg width="13" height="9" viewBox="0 0 13 9" fill="none" stroke={DARK} strokeWidth="2.600"><path d="M1 7.500 6.500 2 12 7.500" /></svg>
          </Collapse>
        </Groups>
      </Ribbon>
      <Body>
        <Rail>
          <svg width="24" height="24" viewBox="0 0 24 24" fill="none" stroke="#111" strokeWidth="1.600"><path d="M2.300 1V21.500H22M5.500 5.500H8V18H5.500ZM11.500 9H14V18H11.500ZM17.500 2H20.500V18H17.500Z" /></svg>
          <svg width="24" height="24" viewBox="0 0 24 24" fill="none" stroke="#797775" strokeWidth="1.500"><path d="M1 1H23V23H1ZM1 4H23M1 10H23M1 16.500H23M8.500 4V23M15.500 4V23" /></svg>
          <svg width="28" height="28" viewBox="0 0 28 28" fill="none" stroke="#797775" strokeWidth="1.500"><path d="M1 9H12V19H1ZM1 13H12M16 1H27V12H16ZM16 5H27M16 16H27V27H16ZM16 20H27M7 9V4H16M7 19V24H16" /></svg>
          <svg width="27" height="25" viewBox="0 0 27 25" fill="none" stroke="#797775" strokeWidth="1.400"><path d="M7 16V3Q7 1 9 1H16L22 7V17Q22 20 20 20M15.500 1V7.500H22M25.500 9V16Q26 22 21.500 23" /><text x="0" y="24.500" fontFamily={UI} fontWeight="600" fontSize="10" fill="#797775" stroke="none" textLength="20">DAX</text></svg>
        </Rail>
        <Canvas><Report /></Canvas>
        <FiltersPane>
          <Double flip />
          <FilterGlyph width="17" height="42" viewBox="0 0 17 42" fill="none" stroke="#252423" strokeWidth="1.500"><path d="M15.500 24.500V41L9 35.500H1V31H9Z" /></FilterGlyph>
          <FiltersTitle>Filters</FiltersTitle>
        </FiltersPane>
        <VizPane>
          <PaneHead>Visualizations<Double /></PaneHead>
          <SubHead>Build visual</SubHead>
          <ModeRow>
            <Mode $on>
              <svg width="48" height="48" viewBox="219 270 144 144" fill="none" stroke="#252423" strokeWidth="5">
                <path d="M237 291H324" /><path d="M239 312H344V345H239ZM239 361H344V394H239Z" fill={GREEN} stroke="#e8e8e8" /><path d="M239 312H344V345H239ZM239 361H344V394H239Z" strokeDasharray="7 5" />
              </svg>
            </Mode>
            <Mode>
              <svg width="48" height="48" viewBox="517 270 144 144" fill="none" stroke="#252423" strokeWidth="4">
                <path d="M548 376V334H574V366M574 366V295H603V350M603 318H630" /><path d="M640 328Q614 342 594 370L604 380Q628 358 640 328ZM594 370Q580 370 578 384L562 392Q590 400 604 380Z" fill="#fff" />
              </svg>
            </Mode>
            <Mode>
              <svg width="48" height="48" viewBox="814 270 144 144" fill="none" stroke="#252423" strokeWidth="4.500">
                <circle cx="877" cy="333" r="43" /><path d="M836 332 856 324 872 336 914 308M856 344V368M872 352V374M888 346V372M904 336V362" /><path d="M908 364 938 393" strokeWidth="9" />
              </svg>
            </Mode>
          </ModeRow>
          <Notch width="270" height="14" viewBox="0 0 270 14" fill="none" stroke="#8a8886" strokeWidth="1.200"><path d="M0 12.500H24L36 1 48 12.500H270" /></Notch>
          <Gallery>
            {gallery.map((g, i) => <Tile key={i} $on={i === 6}><div>{g && <V>{g}</V>}</div></Tile>)}
          </Gallery>
          <Dots><Ellipsis gap={9} /></Dots>
          <Wells>
            <WellList>
              <WellLabel>X-axis</WellLabel>
              <Well><Pill>lastmod<PillIcons><Arrow open /><Cross /></PillIcons></Pill></Well>
              <WellLabel>Y-axis</WellLabel>
              <Well><Pill>Sum of reviews_count<PillIcons><Arrow open /><Cross /></PillIcons></Pill></Well>
            </WellList>
            <WellThumb />
          </Wells>
          <Tip>Name<b>'apps'[reviews_count]</b></Tip>
        </VizPane>
        <DataPane>
          <PaneHead $l={12}>Data<Double /></PaneHead>
          <Search>
            <svg width="21" height="21" viewBox="0 0 21 21" fill="none" stroke="#4a4846" strokeWidth="1.300"><circle cx="13.500" cy="7.500" r="6.800" /><path d="M8.800 12.200.6 20.400" /></svg>
            <span>Search</span>
          </Search>
          <TreeWrap>
            <Tree>{tree.map((r, i) => <TreeRow key={i} r={r} />)}</Tree>
            <TreeBar />
          </TreeWrap>
        </DataPane>
      </Body>
    </Page>
  );
}
